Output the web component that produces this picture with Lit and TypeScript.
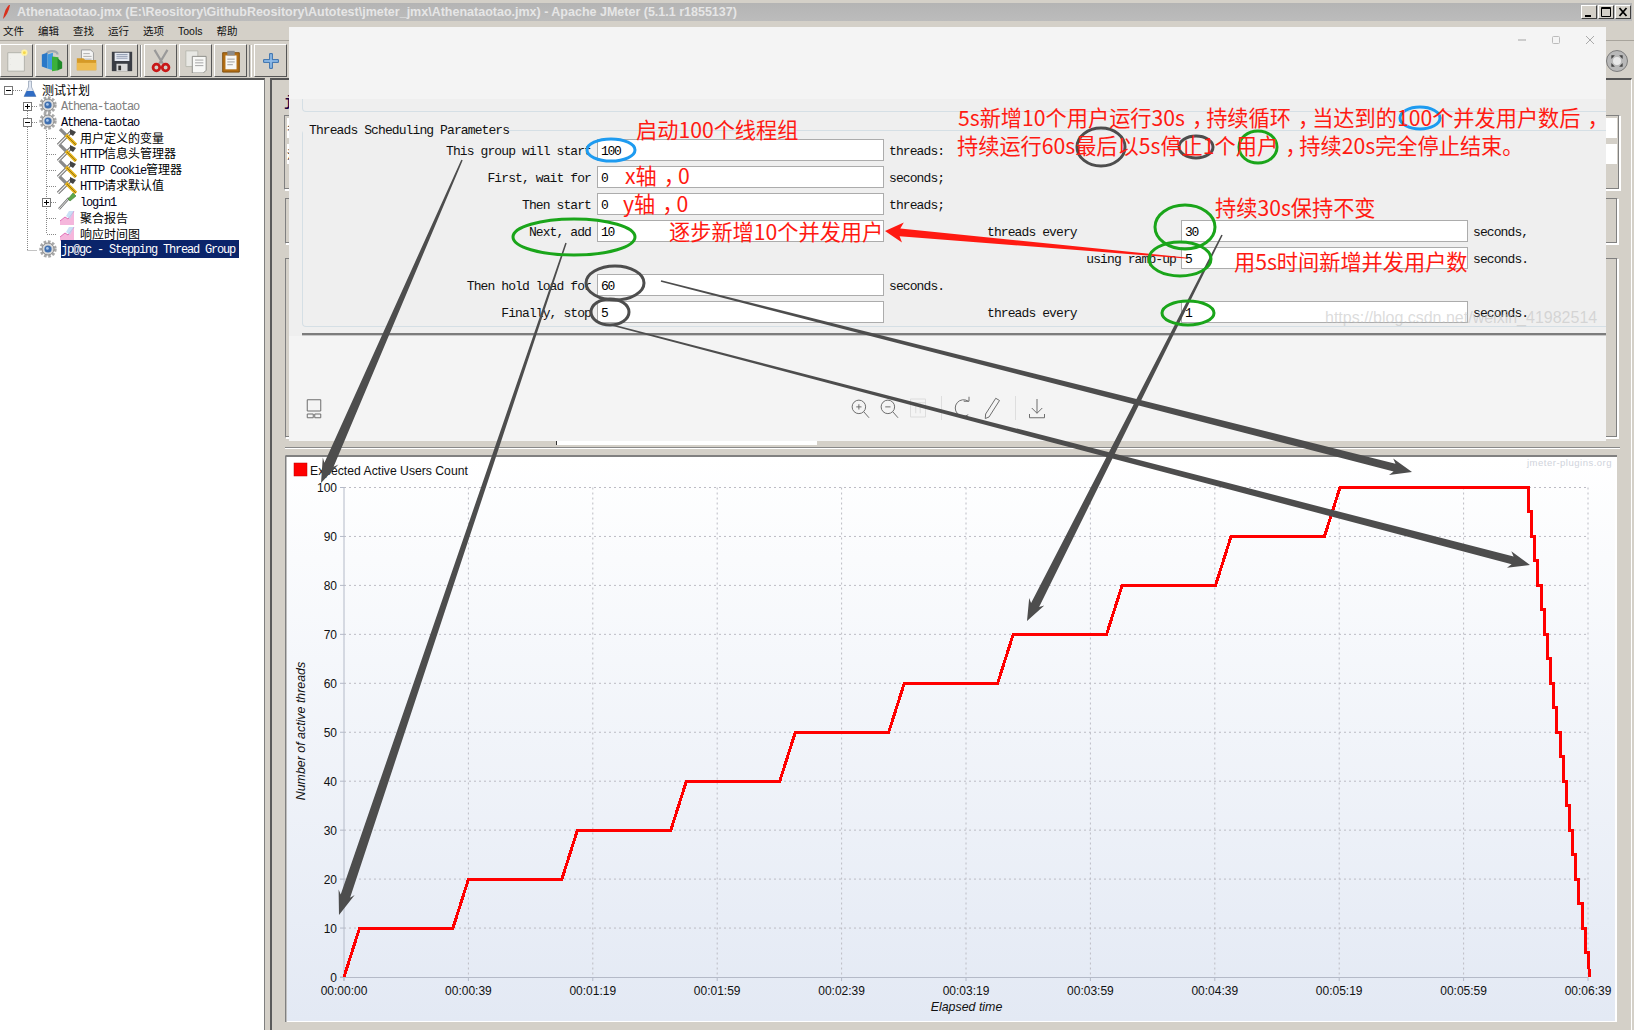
import { LitElement, html, css, svg } from 'lit';
import { customElement } from 'lit/decorators.js';

const RED = '#ff1a12';
const DARK = '#4d4d4d';
const GREEN = '#1aa51a';
const BLUE = '#1e9bf0';

// chart geometry, in page pixels
const X0 = 344;
const Y0 = 977;
const Y100 = 487.5;
const STEP_X = 124.4;
const PX_PER_SEC = 3.1125;
const yOf = (v: number) => Y0 - ((Y0 - Y100) * v) / 100;

const xLabels = ['00:00:00', '00:00:39', '00:01:19', '00:01:59', '00:02:39', '00:03:19', '00:03:59', '00:04:39', '00:05:19', '00:05:59', '00:06:39'];

function curve() {
  const pts: string[] = [`${X0},${Y0}`];
  let x = X0;
  for (let n = 1; n <= 10; n++) {
    // ramp 5s, hold 30s
    x += 5 * PX_PER_SEC;
    pts.push(`${x},${yOf(n * 10)}`);
    if (n < 10) {
      x += 30 * PX_PER_SEC;
      pts.push(`${x},${yOf(n * 10)}`);
    }
  }
  x = 1528.5;
  pts.push(`${x},${yOf(100)}`);
  for (let v = 95; v >= 5; v -= 5) {
    pts.push(`${x},${yOf(v)}`);
    x += 3.15;
    pts.push(`${x},${yOf(v)}`);
  }
  pts.push(`${x + 1},${yOf(0)}`);
  return pts.join(' ');
}

// tapered arrow polygon, thin at the start, with a notched head at the tip
function arrow(x1: number, y1: number, x2: number, y2: number, w0: number, w1: number, headL: number, headW: number) {
  const len = Math.hypot(x2 - x1, y2 - y1);
  const ux = (x2 - x1) / len;
  const uy = (y2 - y1) / len;
  const nx = -uy;
  const ny = ux;
  const bx = x2 - ux * headL;
  const by = y2 - uy * headL;
  const nbx = x2 - ux * headL * 1.2;
  const nby = y2 - uy * headL * 1.2;
  const p = [
    [x1 + (nx * w0) / 2, y1 + (ny * w0) / 2],
    [bx + (nx * w1) / 2, by + (ny * w1) / 2],
    [nbx + (nx * headW) / 2, nby + (ny * headW) / 2],
    [x2, y2],
    [nbx - (nx * headW) / 2, nby - (ny * headW) / 2],
    [bx - (nx * w1) / 2, by - (ny * w1) / 2],
    [x1 - (nx * w0) / 2, y1 - (ny * w0) / 2],
  ];
  return p.map((q) => q.map((n) => n.toFixed(1)).join(',')).join(' ');
}

const arrows = [
  { p: arrow(462, 160, 321, 483, 1.5, 10, 20, 17), c: DARK },
  { p: arrow(566, 243, 339, 915, 1.5, 10, 20, 17), c: DARK },
  { p: arrow(661, 281, 1412, 472, 1.5, 8, 18, 17), c: DARK },
  { p: arrow(612, 325, 1530, 565, 1.5, 8, 18, 17), c: DARK },
  { p: arrow(1222, 235, 1027, 621, 1.5, 9, 18, 17), c: DARK },
  { p: arrow(1186, 258, 885, 231, 1, 8, 15, 20), c: RED },
];

const rings = [
  [611, 150, 24, 11, BLUE],
  [574, 237, 61, 18, GREEN],
  [615, 283, 29, 17, DARK],
  [610, 312, 19, 13, DARK],
  [1185, 227, 30, 22, GREEN],
  [1180, 259, 31, 17, GREEN],
  [1188, 313, 26, 12, GREEN],
  [1420, 118, 20, 11, BLUE],
  [1101, 147, 24, 19, DARK],
  [1196, 147, 17, 11, DARK],
  [1258, 147, 19, 16, GREEN],
] as const;

const notes = [
  [636, 138, '启动100个线程组'],
  [625, 184, 'x轴，0'],
  [623, 212, 'y轴，0'],
  [669, 240, '逐步新增10个并发用户'],
  [958, 126, '5s新增10个用户运行30s，持续循环，当达到的100个并发用户数后，'],
  [957, 154, '持续运行60s最后以5s停止1个用户，持续20s完全停止结束。'],
  [1215, 216, '持续30s保持不变'],
  [1234, 270, '用5s时间新增并发用户数'],
] as const;

// commas sit in the middle of their cell in the reference, so nudge them and pull the next run back
const noteText = (s: string) =>
  s.split(/(，)/).map((p, i, all) => {
    if (p === '，') return svg`<tspan dx="7">${p}</tspan>`;
    return i > 0 && all[i - 1] === '，' ? svg`<tspan dx="-7">${p}</tspan>` : svg`<tspan>${p}</tspan>`;
  });

const gear = () => svg`<svg class="ic20" viewBox="0 0 20 18">
  <circle cx="10" cy="9" r="7.2" fill="none" stroke="#a8a8a8" stroke-width="3" stroke-dasharray="2.6 1.6"/>
  <circle cx="10" cy="9" r="6" fill="#d8d8d8" stroke="#8a8a8a"/>
  <circle cx="10" cy="9" r="3.6" fill="#3f6fb0"/><circle cx="9.4" cy="8.4" r="1.4" fill="#a9c6ea"/></svg>`;
const flask = () => svg`<svg class="ic14" viewBox="0 0 14 18">
  <path d="M5.5 1h3v6l4.5 9.5H1L5.5 7z" fill="#dfe6f2" stroke="#98a4b8" stroke-width=".8"/>
  <path d="M3.6 11h6.8l2.6 5.5H1z" fill="#2f6cc4"/></svg>`;
const tool = () => svg`<svg class="ic20" viewBox="0 0 20 18">
  <path d="M1 17 15 3" stroke="#6e6e6e" stroke-width="3.2"/><path d="M1 17 15 3" stroke="#eee" stroke-width="1.2"/>
  <path d="M13 1l6 3-3 4-3-2z" fill="#444"/>
  <path d="M3 1l7 7" stroke="#8a8a8a" stroke-width="3.2"/><path d="M9 7l10 10" stroke="#e3b21c" stroke-width="3.4"/><path d="M10 8l9 9" stroke="#7a5c0c" stroke-width=".7"/></svg>`;
const dropper = () => svg`<svg class="ic20" viewBox="0 0 20 18">
  <path d="M2 17 12 6" stroke="#777" stroke-width="2.6"/><path d="M2 17 12 6" stroke="#eee" stroke-width=".9"/>
  <path d="M11 7l5-6 3 3-6 5z" fill="#5da84a" stroke="#3c7a30" stroke-width=".6"/></svg>`;
const graph = () => svg`<svg class="ic20" viewBox="0 0 20 18">
  <path d="M3 17v-4l5-4 3 2 6-8v14z" fill="#f5b6dc"/><path d="M3 13l5-4 3 2 6-8" fill="none" stroke="#e070b8"/>
  <path d="M9 8l3-5h5l-4 8z" fill="#bcd8f2" opacity=".8"/></svg>`;

const tbNew = svg`<svg class="ic24" viewBox="0 0 24 26"><path d="M2 4h18v20H2z" fill="#f0f0ec" stroke="#b0b0a8"/><path d="M5 10v.1M5 17v.1" stroke="#999"/><circle cx="20" cy="4" r="3.4" fill="#fff2a0"/><circle cx="20" cy="4" r="1.6" fill="#f6d84a"/></svg>`;
const tbTemplates = svg`<svg class="ic24" viewBox="0 0 24 26"><path d="M6 6c0-5 12-5 12 0" fill="none" stroke="#a0a8b0" stroke-width="2.4"/><path d="M1 6l6-2v17l-6-2z" fill="#2a78c8"/><path d="M7 6l6-2v19l-6-2z" fill="#3f98de"/><path d="M12 8l7 1v14l-7 1z" fill="#3bb03a"/><path d="M18 10l5 4v7l-5 2z" fill="#1f8a28"/></svg>`;
const tbOpen = svg`<svg class="ic24" viewBox="0 0 24 26"><path d="M6 1h10l3 3v12H6z" fill="#f4f4f4" stroke="#999"/><path d="M8 5h7M8 8h9M8 11h9" stroke="#aaa"/><path d="M1 10h7l2 2h12v11H1z" fill="#d59a28"/><path d="M1 15h21v8H1z" fill="#eebc52"/></svg>`;
const tbSave = svg`<svg class="ic24" viewBox="0 0 24 26"><path d="M1 3h22v21H1z" fill="#3a3d44"/><path d="M4 4h16v9H4z" fill="#e4e8f0"/><path d="M6 6h12M6 8h12M6 10h12" stroke="#8f9ab0"/><path d="M6 16h12v8H6z" fill="#d8d8d8"/><path d="M8 18h3v5H8z" fill="#333"/></svg>`;
const tbCut = svg`<svg class="ic24" viewBox="0 0 24 26"><path d="M5 1l9 15M19 1l-9 15" stroke="#9a9a9a" stroke-width="2.4"/><circle cx="7" cy="20" r="3.6" fill="none" stroke="#c81818" stroke-width="3"/><circle cx="17" cy="20" r="3.6" fill="none" stroke="#c81818" stroke-width="3"/></svg>`;
const tbCopy = svg`<svg class="ic24" viewBox="0 0 24 26"><path d="M1 2h13v17H1z" fill="#e8e8e4" stroke="#b8b8b0"/><path d="M8 8h15v15l-3 3H8z" fill="#f8f8f6" stroke="#8a8a84"/><path d="M11 12h9M11 15h9M11 18h9" stroke="#a0a0a0"/></svg>`;
const tbPaste = svg`<svg class="ic24" viewBox="0 0 24 26"><path d="M3 4h18v21H3z" fill="#b46f14" stroke="#7a4a0c"/><path d="M6 7h12v15H6z" fill="#f8f8f6"/><path d="M8 2h8v5H8z" fill="#8c8c8c"/><path d="M8 11h8M8 14h8M8 17h6" stroke="#999"/></svg>`;
const tbPlus = svg`<svg class="ic24" viewBox="0 0 24 26"><path d="M10.5 5h3v6.5H20v3h-6.5V21h-3v-6.5H4v-3h6.5z" fill="#8fbbe8" stroke="#2f68a8"/></svg>`;

const lensIn = svg`<svg class="ic24" viewBox="-4 -4 32 32" fill="none" stroke="#6a6a6a" stroke-width="1.3"><circle cx="10.5" cy="10.5" r="9"/><path d="M17 17l7 8M7 10.5h7M10.5 7v7"/></svg>`;
const lensOut = svg`<svg class="ic24" viewBox="-4 -4 32 32" fill="none" stroke="#6a6a6a" stroke-width="1.3"><circle cx="10.5" cy="10.5" r="9"/><path d="M17 17l7 8M7 10.5h7"/></svg>`;
const boxOff = svg`<svg class="ic24" viewBox="-4 -4 32 32" fill="none" stroke="#dcdcdc" stroke-width="1.3"><path d="M2 0h20v24H2zM2 5h20M9 5v14M15 5v14"/></svg>`;
const redo = svg`<svg class="ic24" viewBox="-4 -4 32 32" fill="none" stroke="#6a6a6a" stroke-width="1.3"><path d="M19 3A11 11 0 1 0 19 21"/><path d="M13 3h7V-3"/></svg>`;
const pencil = svg`<svg class="ic24" viewBox="-4 -4 32 32" fill="none" stroke="#6a6a6a" stroke-width="1.3"><path d="M17 -1l5 3L8 24l-5 2 .5-6z"/></svg>`;
const download = svg`<svg class="ic24" viewBox="-4 -4 32 32" fill="none" stroke="#6a6a6a" stroke-width="1.3"><path d="M12 0v19M5 12l7 7 7-7M2 20v5h20v-5"/></svg>`;
const layoutIc = svg`<svg class="ic24" viewBox="-4 -4 32 32" fill="none" stroke="#6a6a6a" stroke-width="1.3"><path d="M3 1h18v15H3zM3 20h8v5H3zM13 20h8v5h-8z"/></svg>`;

// ascii parts get the narrow bitmap-like mono, the rest stays CJK
const mixed = (s: string) =>
  s.split(/([\x00-\x7f]+)/).filter(Boolean).map((p) => (/^[\x00-\x7f]/.test(p) ? html`<span class="lat">${p}</span>` : p));

const treeRows = [
  { lv: 'l0', icon: flask, text: '测试计划' },
  { lv: 'l1 off', icon: gear, text: 'Athena-taotao' },
  { lv: 'l1', icon: gear, text: 'Athena-taotao' },
  { lv: 'l2', icon: tool, text: '用户定义的变量' },
  { lv: 'l2', icon: tool, text: 'HTTP信息头管理器' },
  { lv: 'l2', icon: tool, text: 'HTTP Cookie管理器' },
  { lv: 'l2', icon: tool, text: 'HTTP请求默认值' },
  { lv: 'l2', icon: dropper, text: 'login1' },
  { lv: 'l2', icon: graph, text: '聚合报告' },
  { lv: 'l2', icon: graph, text: '响应时间图' },
  { lv: 'l1 sel', icon: gear, text: 'jp@gc - Stepping Thread Group' },
];

const handle = (x: number, y: number, plus: boolean) => svg`
  <rect x=${x + 0.5} y=${y + 0.5} width="8" height="8" fill="#fff" stroke="#777"/>
  <path d="M${x + 2} ${y + 4.5}h5${plus ? ` M${x + 4.5} ${y + 2}v5` : ''}" stroke="#000"/>`;

@customElement('app-root')
export class AppRoot extends LitElement {
  static styles = css`
    :host {
      display: block;
      width: 1634px;
      height: 1030px;
      overflow: hidden;
      position: relative;
      background: #d4d0c8;
      font-family: 'Liberation Sans', sans-serif;
    }
    .app {
      display: flex;
      flex-direction: column;
      height: 100%;
    }
    .ic20 { width: 20px; height: 18px; flex: none; }
    .ic14 { width: 14px; height: 18px; flex: none; }
    .ic24 { width: 24px; height: 24px; flex: none; }

    .title {
      margin: 3px 2px 0 0;
      height: 18px;
      flex: none;
      display: flex;
      align-items: center;
      background: linear-gradient(#b4b4b4, #bcbcbc);
      color: #e6e6e6;
      font-size: 12.5px;
      font-weight: bold;
      white-space: nowrap;
    }
    .title svg { width: 12px; height: 16px; margin: 0 4px 0 1px; }
    .winbtns { margin-left: auto; display: flex; gap: 1px; padding-right: 1px; }
    .winbtn {
      width: 16px;
      height: 14px;
      background: #d4d0c8;
      border: 1px solid;
      border-color: #fff #404040 #404040 #fff;
      box-sizing: border-box;
    }
    .winbtn svg { display: block; width: 14px; height: 12px; margin: 0; }

    .menu {
      height: 19px;
      flex: none;
      display: flex;
      align-items: center;
      gap: 14px;
      padding-left: 3px;
      font: 10.5px 'Liberation Sans', 'Noto Sans CJK SC', sans-serif;
      color: #111;
    }
    .bar {
      height: 38px;
      flex: none;
      box-sizing: border-box;
      display: flex;
      align-items: center;
      gap: 2px;
      border-top: 1px solid #a8a49c;
      padding: 2px 3px 0 0;
    }
    .btn {
      width: 33px;
      height: 33px;
      box-sizing: border-box;
      display: flex;
      align-items: center;
      justify-content: center;
      border: 1px solid;
      border-color: #fff #555 #555 #fff;
    }
    .sep { width: 2px; height: 32px; border-left: 1px solid #888; border-right: 1px solid #fff; box-sizing: border-box; }
    .sep2 { width: 3px; }
    .gauge { margin-left: auto; width: 22px; height: 22px; margin-right: 3px; }

    .main { flex: 1; display: flex; min-height: 0; }
    .tree {
      width: 265px;
      flex: none;
      box-sizing: border-box;
      position: relative;
      background: #fff;
      border-top: 2px solid #555;
      border-right: 1px solid #808080;
      padding-top: 1px;
    }
    .wires { position: absolute; left: 0; top: -2px; width: 265px; height: 200px; }
    .row {
      position: relative;
      height: 16px;
      display: flex;
      align-items: center;
      font: 12px 'Noto Sans CJK SC', sans-serif;
      color: #000;
      white-space: nowrap;
    }
    .row .lat {
      font-family: 'Liberation Mono', monospace;
      font-size: 12px;
      letter-spacing: -1.2px;
      color: #000018;
    }
    .l0 { padding-left: 23px; gap: 5px; }
    .l1 { padding-left: 38px; gap: 3px; }
    .l2 { padding-left: 57px; gap: 3px; }
    .off .lat { color: #808080; }
    .label { display: block; }
    .sel .label { background: #0a246a; padding: 1px 0; line-height: 14px; width: 178px; }
    .sel .lat { color: #fff; }

    .split { width: 5px; flex: none; }
    .pane {
      flex: 1;
      min-width: 0;
      box-sizing: border-box;
      display: flex;
      flex-direction: column;
      border-left: 2px solid #5a5a5a;
      border-top: 2px solid #555;
      border-right: 1px solid #fff;
      margin-right: 2px;
      padding: 0 13px 8px 13px;
    }
    .heading { height: 35px; flex: none; display: flex; align-items: center; padding-top: 8px; box-sizing: border-box; font: bold 14px 'Liberation Mono', monospace; color: #200040; margin-left: -1px; }
    .box {
      flex: none;
      box-sizing: border-box;
      border: 1px solid;
      border-color: #808080 #fff #fff #808080;
      box-shadow: inset -1px -1px 0 #808080, 1px 1px 0 #fff;
    }
    .b1 { height: 75px; padding: 2px 2px 0 2px; margin-left: -1px; margin-right: -2px; font: 11px 'Noto Sans CJK SC', sans-serif; }
    .b1 div { height: 20px; display: flex; align-items: center; background: #fff; margin-bottom: 6px; }
    .b2 { height: 46px; margin-top: 8px; }
    .b3 { height: 180px; margin-top: 14px; }
    .strip { height: 4px; flex: none; margin: 3px 0 0 271px; width: 260px; background: #fff; border-left: 1px solid #333; }
    .rule { height: 0; flex: none; margin: 2px -2px 6px 0; border-top: 1px solid #888; border-bottom: 1px solid #fff; }

    .chart { flex: 1; min-height: 0; display: block; }
    .chart svg { display: block; width: 1332px; height: 567px; }
    .chart text { font-family: 'Liberation Sans', sans-serif; font-size: 12px; fill: #111; }
    .chart .ttl { font-style: italic; font-size: 12.4px; }
    .chart .legend { font-size: 12.2px; }
    .chart .brand { font-size: 9.5px; fill: #cfd3dc; letter-spacing: 0.5px; }

    /* floating window that covers the middle of the page */
    .sheet {
      position: absolute;
      left: 289px;
      top: 27px;
      width: 1317px;
      height: 414px;
      background: #f4f4f4;
      display: flex;
      flex-direction: column;
    }
    .sheethead {
      height: 72px;
      flex: none;
      display: flex;
      justify-content: flex-end;
      align-items: flex-start;
      gap: 20px;
      padding: 6px 9px 0 0;
      box-sizing: border-box;
    }
    .sheethead svg { width: 14px; height: 14px; }
    .form {
      flex: none;
      height: 237px;
      box-sizing: border-box;
      background: #efefef;
      padding-left: 13px;
    }
    .stub { height: 13px; box-sizing: border-box; border: 1px solid #d5dfe5; border-top: none; border-right: none; border-radius: 0 0 0 4px; }
    .rulebelow { height: 3px; margin-top: 6px; background: #7c7c7c; border-bottom: 1px solid #c8c8c8; box-sizing: border-box; }
    fieldset {
      margin: 10px 0 0 0;
      padding: 1px 0 4px 0;
      height: 205px;
      box-sizing: border-box;
      border: 1px solid #d5dfe5;
      border-right: none;
      border-radius: 4px 0 0 4px;
      min-width: 0;
    }
    legend { padding: 0 0 0 6px; height: 16px; line-height: 18px; }
    legend, .grid label, .grid span {
      font-family: 'Liberation Mono', monospace;
      font-size: 13px;
      letter-spacing: -0.9px;
      color: #111;
      white-space: nowrap;
    }
    .grid {
      display: grid;
      grid-template-columns: 289px 287px 92px 190px 287px 1fr;
      grid-auto-rows: 22px;
      column-gap: 5px;
      row-gap: 5px;
      align-items: center;
    }
    .grid label, .grid span { padding-top: 2px; }
    .grid label { text-align: right; padding-right: 1px; }
    .grid .lead { text-align: left; padding-left: 1px; }
    .grid .end { padding-right: 0; }
    .grid input {
      width: 100%;
      height: 22px;
      box-sizing: border-box;
      margin: 0;
      padding: 2px 3px 0 3px;
      border: 1px solid #acacac;
      background: #fff;
      font-family: 'Liberation Mono', monospace;
      font-size: 13px;
      letter-spacing: -1.3px;
      color: #000;
      outline: none;
    }
    .tools {
      flex: 1;
      display: flex;
      align-items: flex-end;
      gap: 5px;
      padding: 0 0 21px 13px;
    }
    .tools .first { margin-right: 517px; height: 24px; }
    .tsep { width: 1px; height: 24px; background: #dedede; margin: 0 4px 0 6px; }

    .marks {
      position: absolute;
      left: 0;
      top: 0;
      width: 1634px;
      height: 1030px;
      pointer-events: none;
    }
    .marks text {
      font-family: 'Noto Sans CJK SC', 'Liberation Sans', sans-serif;
      font-size: 21.2px;
      fill: #ff1a12;
    }
    .marks .mark-url {
      font-family: 'Liberation Sans', sans-serif;
      font-size: 16px;
      fill: rgba(190, 190, 190, 0.55);
    }
  `;

  private renderChart() {
    const vlines = xLabels.map((_, i) => X0 + i * STEP_X);
    const hvals = [0, 10, 20, 30, 40, 50, 60, 70, 80, 90, 100];
    const right = X0 + 10 * STEP_X;
    return html`<div class="chart">
      <svg viewBox="285 455 1332 567">
        <defs>
          <linearGradient id="bg" x1="0" y1="0" x2="0" y2="1">
            <stop offset="0" stop-color="#ffffff" /><stop offset="1" stop-color="#e3e9f4" />
          </linearGradient>
        </defs>
        <rect x="285" y="455" width="1332" height="567" fill="#fff" />
        <rect x="287" y="457" width="1328" height="564" fill="url(#bg)" />
        <path d="M285.5 456H1617M285.5 455.5V1022" stroke="#808080" stroke-width="2" fill="none" />
        ${vlines.map((x, i) => (i ? svg`<line x1=${x} x2=${x} y1=${Y100} y2=${Y0} stroke="#bcbcc4" stroke-dasharray="2 3" />` : ''))}
        ${hvals.map((v) => (v ? svg`<line x1=${X0} x2=${right} y1=${yOf(v)} y2=${yOf(v)} stroke="#bcbcc4" stroke-dasharray="2 3" />` : ''))}
        <line x1=${X0} x2=${X0} y1=${Y100} y2=${Y0 + 4} stroke="#b4bac8" />
        <line x1=${X0 - 4} x2=${right} y1=${Y0 + 0.5} y2=${Y0 + 0.5} stroke="#b4bac8" />
        ${vlines.map((x) => svg`<line x1=${x} x2=${x} y1=${Y0} y2=${Y0 + 4} stroke="#b4bac8" />`)}
        ${hvals.map((v) => svg`<line x1=${X0 - 4} x2=${X0} y1=${yOf(v)} y2=${yOf(v)} stroke="#b4bac8" />`)}
        ${hvals.map((v) => svg`<text x=${X0 - 7} y=${yOf(v) + 4.5} text-anchor="end">${v}</text>`)}
        ${xLabels.map((t, i) => svg`<text x=${X0 + i * STEP_X} y="995" text-anchor="middle">${t}</text>`)}
        <rect x="294" y="463" width="13" height="13" fill="#f00" stroke="#b00" stroke-width=".5" />
        <text class="legend" x="310" y="475">Expected Active Users Count</text>
        <text class="ttl" x="966.5" y="1011" text-anchor="middle">Elapsed time</text>
        <text class="ttl" transform="translate(305 731) rotate(-90)" text-anchor="middle">Number of active threads</text>
        <text class="brand" x="1527" y="466">jmeter-plugins.org</text>
        <polyline points=${curve()} fill="none" stroke="#f00" stroke-width="3" stroke-linejoin="miter" shape-rendering="crispEdges" />
      </svg>
    </div>`;
  }

  private renderSheet() {
    return html`<div class="sheet">
      <div class="sheethead">
        <svg viewBox="0 0 14 14" stroke="#bbb" fill="none" stroke-width="1.4"><path d="M3 7h8" /></svg>
        <svg viewBox="0 0 14 14" stroke="#bbb" fill="none"><rect x="3.5" y="3.5" width="7" height="7" rx="1" /></svg>
        <svg viewBox="0 0 14 14" stroke="#aaa" fill="none"><path d="M3 3l8 8M11 3l-8 8" /></svg>
      </div>
      <div class="form">
        <div class="stub"></div>
        <fieldset>
          <legend>Threads Scheduling Parameters</legend>
          <div class="grid">
            <label>This group will start</label><input readonly value="100" /><span>threads:</span><i></i><i></i><i></i>
            <label>First, wait for</label><input readonly value="0" /><span>seconds;</span><i></i><i></i><i></i>
            <label>Then start</label><input readonly value="0" /><span>threads;</span><i></i><i></i><i></i>
            <label>Next, add</label><input readonly value="10" /><i></i><label class="lead">threads every</label><input readonly value="30" /><span>seconds,</span>
            <i></i><i></i><i></i><label class="end">using ramp-up</label><input readonly value="5" /><span>seconds.</span>
            <label>Then hold load for</label><input readonly value="60" /><span>seconds.</span><i></i><i></i><i></i>
            <label>Finally, stop</label><input readonly value="5" /><i></i><label class="lead">threads every</label><input readonly value="1" /><span>seconds.</span>
          </div>
        </fieldset>
        <div class="rulebelow"></div>
      </div>
      <div class="tools">
        <span class="first">${layoutIc}</span>
        ${lensIn}${lensOut}${boxOff}<span class="tsep"></span>${redo}${pencil}<span class="tsep"></span>${download}
      </div>
    </div>`;
  }

  render() {
    return html`<div class="app">
        <div class="title">
          <svg viewBox="0 0 12 16"><path d="M8 1C4 5 3 10 2 15c3-3 6-8 7-14z" fill="#d8301c" /></svg>
          Athenataotao.jmx (E:\\Reository\\GithubReository\\Autotest\\jmeter_jmx\\Athenataotao.jmx) - Apache JMeter (5.1.1 r1855137)
          <div class="winbtns">
            <div class="winbtn"><svg viewBox="0 0 14 12"><path d="M3 9h6v2H3z" /></svg></div>
            <div class="winbtn"><svg viewBox="0 0 14 12" fill="none" stroke="#000"><path d="M2.5 1.5h9v9h-9zM2.5 2.5h9" /></svg></div>
            <div class="winbtn"><svg viewBox="0 0 14 12" fill="none" stroke="#000" stroke-width="1.8"><path d="M3.5 2l7 8M10.5 2l-7 8" /></svg></div>
          </div>
        </div>
        <div class="menu">
          <span>文件</span><span>编辑</span><span>查找</span><span>运行</span><span>选项</span><span>Tools</span><span>帮助</span>
        </div>
        <div class="bar">
          <div class="btn">${tbNew}</div>
          <div class="btn">${tbTemplates}</div>
          <div class="btn">${tbOpen}</div>
          <div class="btn">${tbSave}</div>
          <div class="sep"></div>
          <div class="btn">${tbCut}</div>
          <div class="btn">${tbCopy}</div>
          <div class="btn">${tbPaste}</div>
          <div class="sep sep2"></div>
          <div class="btn">${tbPlus}</div>
          <svg class="gauge" viewBox="0 0 22 22">
            <circle cx="11" cy="11" r="10.5" fill="#b8b8b8" stroke="#7c7c7c" />
            <circle cx="11" cy="11" r="4" fill="#e8e8e8" />
            <path d="M11 3l2.5 2.5h-5zM11 19l2.5-2.5h-5zM3 11l2.5-2.5v5zM19 11l-2.5-2.5v5z" fill="#444" transform="rotate(45 11 11)" />
          </svg>
        </div>
        <div class="main">
          <div class="tree">
            <svg class="wires" viewBox="0 78 265 200">
              <g stroke="#888" stroke-dasharray="1 1" fill="none">
                <path d="M13 90.5h9M27.5 109v141M32 106.5h6M32 122.5h6M27.5 250.5h10M46.5 130v104" />
                <path d="M47 138.5h10M47 154.5h10M47 170.5h10M47 186.5h10M51 202.5h6M47 218.5h10M47 234.5h10" />
              </g>
              ${handle(4, 86, false)} ${handle(23, 102, true)} ${handle(23, 118, false)} ${handle(42, 198, true)}
            </svg>
            ${treeRows.map(
              (r) => html`<div class="row ${r.lv}">${r.icon()}<span class="label">${mixed(r.text)}</span></div>`
            )}
          </div>
          <div class="split"></div>
          <div class="pane">
            <div class="heading">jp@gc - Stepping Thread Group</div>
            <div class="box b1"><div>名称：</div><div>注释：</div></div>
            <div class="box b2"></div>
            <div class="box b3"></div>
            <div class="strip"></div>
            <div class="rule"></div>
            ${this.renderChart()}
          </div>
        </div>
      </div>
      ${this.renderSheet()}
      <svg class="marks" viewBox="0 0 1634 1030">
        <text class="mark-url" x="1325" y="323">https://blog.csdn.net/weixin_41982514</text>
        ${arrows.map((a) => svg`<polygon points=${a.p} fill=${a.c} />`)}
        ${rings.map(
          (r) => svg`<ellipse cx=${r[0]} cy=${r[1]} rx=${r[2]} ry=${r[3]} fill="none" stroke=${r[4]} stroke-width="3" />`
        )}
        ${notes.map((n) => svg`<text x=${n[0]} y=${n[1]}>${noteText(n[2])}</text>`)}
      </svg>`;
  }
}
